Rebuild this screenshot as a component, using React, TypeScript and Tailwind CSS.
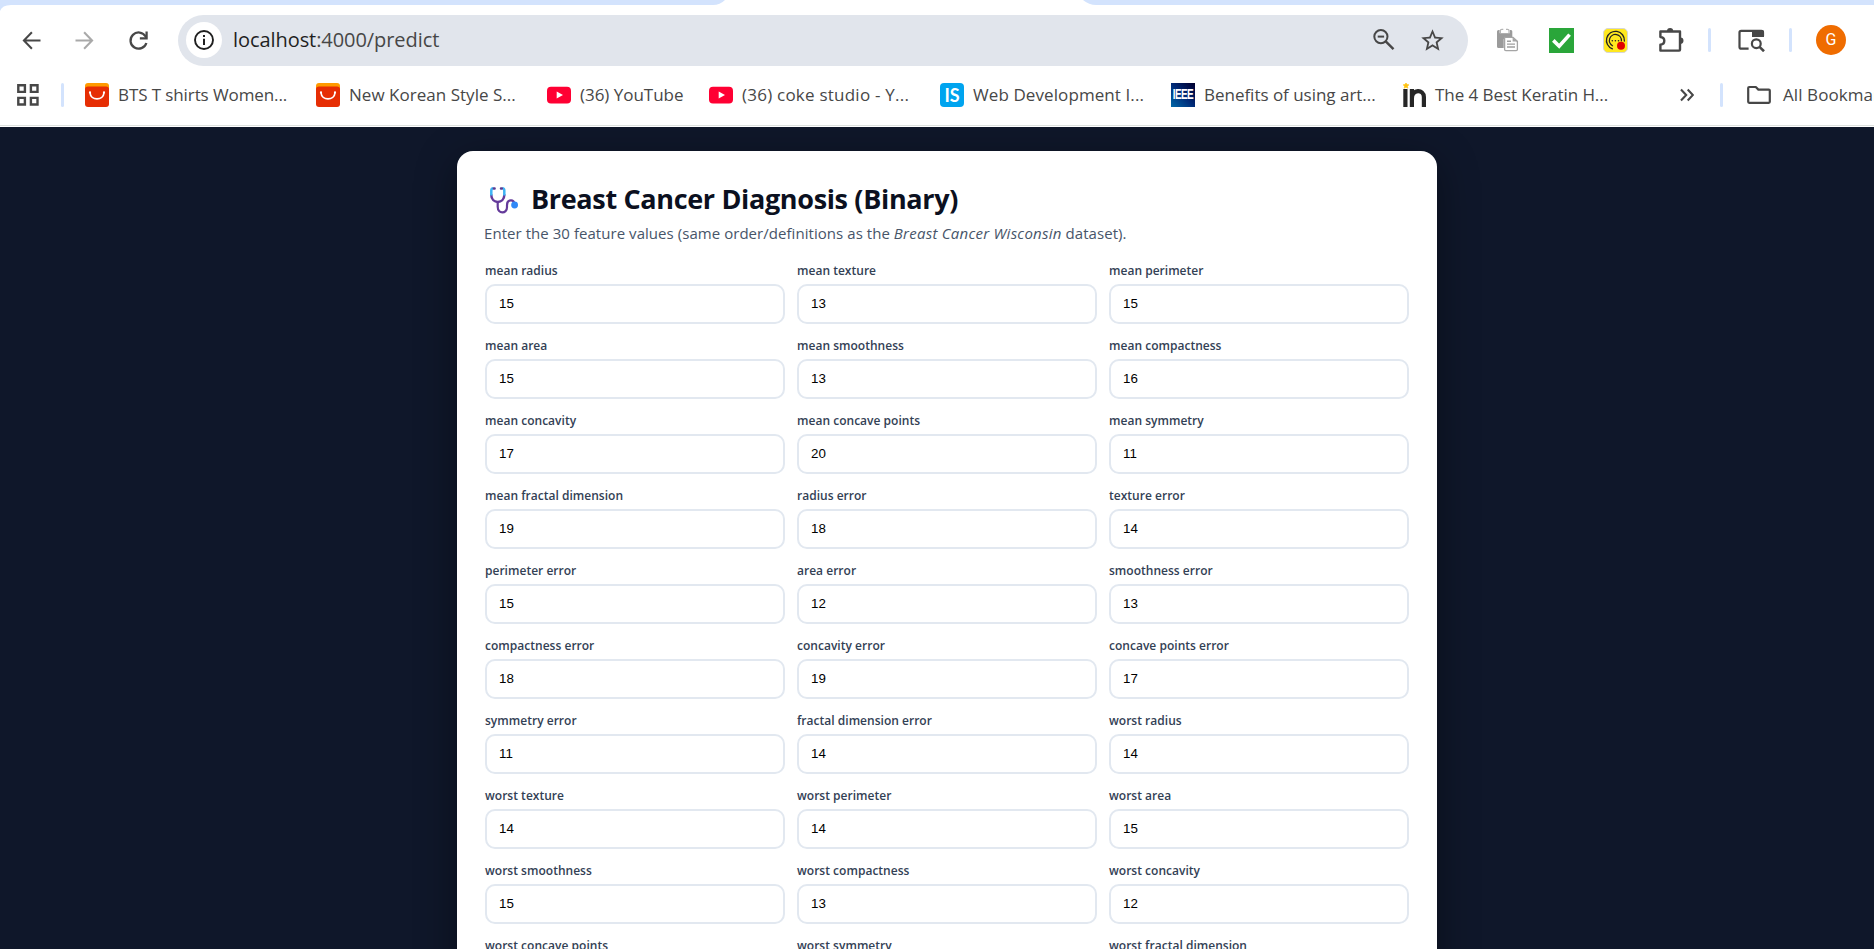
import type { ReactNode } from 'react';

const fields: [string, number][] = [
  ['mean radius', 15], ['mean texture', 13], ['mean perimeter', 15],
  ['mean area', 15], ['mean smoothness', 13], ['mean compactness', 16],
  ['mean concavity', 17], ['mean concave points', 20], ['mean symmetry', 11],
  ['mean fractal dimension', 19], ['radius error', 18], ['texture error', 14],
  ['perimeter error', 15], ['area error', 12], ['smoothness error', 13],
  ['compactness error', 18], ['concavity error', 19], ['concave points error', 17],
  ['symmetry error', 11], ['fractal dimension error', 14], ['worst radius', 14],
  ['worst texture', 14], ['worst perimeter', 14], ['worst area', 15],
  ['worst smoothness', 15], ['worst compactness', 13], ['worst concavity', 12],
  ['worst concave points', 14], ['worst symmetry', 13], ['worst fractal dimension', 15],
];

function Icon({ d, className }: { d: string; className: string }) {
  return (
    <svg viewBox="0 0 24 24" fill="currentColor" className={`shrink-0 ${className}`}>
      <path d={d} />
    </svg>
  );
}

function Separator({ className = '' }: { className?: string }) {
  return <div className={`h-6 w-[3px] shrink-0 rounded-full bg-[#d3e3fd] ${className}`} />;
}

function ShopIcon() {
  return (
    <svg viewBox="0 0 24 24" className="size-6 shrink-0">
      <rect width="24" height="12" rx="3" fill="#ff9a00" />
      <path d="M0 6Q0 3.5 3 3.5H21Q24 3.5 24 6V21Q24 24 21 24H3Q0 24 0 21Z" fill="#e62e04" />
      <path d="M5 9.6C5.6 18 18.4 18 19 9.6" fill="none" stroke="#fff" strokeWidth="1.7" strokeLinecap="round" />
      <circle cx="5" cy="9.4" r="1.1" fill="#fff" />
      <circle cx="19" cy="9.4" r="1.1" fill="#fff" />
    </svg>
  );
}

function VideoIcon() {
  return (
    <svg viewBox="0 0 24 24" className="size-6 shrink-0">
      <rect y="3.8" width="24" height="16.6" rx="4" fill="#ff0033" />
      <path d="M9.7 8.6L16 12.1L9.7 15.6Z" fill="#fff" />
    </svg>
  );
}

function Bookmark({ icon, children, className }: { icon: ReactNode; children: ReactNode; className: string }) {
  return (
    <div className={`flex shrink-0 items-center gap-[9px] whitespace-nowrap ${className}`}>
      {icon}
      <span>{children}</span>
    </div>
  );
}

function TabStrip() {
  return (
    <div className="h-[5px] shrink-0">
      <svg width="1874" height="16" viewBox="0 0 1874 16" className="block">
        <path d="M0 0H725Q720 5 713 5H11Q2 5 0 11Z" fill="#d3e3fd" />
        <path d="M1083 0H1874V5H1096Q1089 5 1083 0Z" fill="#d3e3fd" />
      </svg>
    </div>
  );
}

function Toolbar() {
  return (
    <div className="flex h-[70px] shrink-0 items-center text-[#474747]">
      <Icon className="ml-[18px] size-[27px]" d="M20 11.1H7.4L13 5.3 11.7 4 4 12l7.7 8 1.3-1.3-5.6-5.8H20z" />
      <Icon className="ml-[26px] size-[27px] text-[#a9a9a9]" d="M4 11.1h12.6L11 5.3 12.3 4 20 12l-7.7 8-1.3-1.3 5.6-5.8H4z" />
      <svg viewBox="0 0 24 24" className="ml-[27px] size-[27px] shrink-0" fill="none" stroke="currentColor" strokeWidth="2">
        <path d="M19 14.2A7.2 7.2 0 1 1 18.3 8.4L19 9.6" />
        <path d="M19.2 4V10H13.2" />
      </svg>

      <div className="ml-[26px] flex h-[51px] w-[1290px] shrink-0 items-center rounded-full bg-[#e1e5ec]">
        <div className="ml-2 flex size-9 shrink-0 items-center justify-center rounded-full bg-white text-[#1f1f1f]">
          <svg viewBox="0 0 24 24" className="size-6">
            <circle cx="12" cy="12" r="9" fill="none" stroke="currentColor" strokeWidth="1.9" />
            <path d="M11 10.7h2V17h-2zM11 7h2v2h-2z" fill="currentColor" />
          </svg>
        </div>
        <div className="ml-[11px] flex-1 text-[20px] leading-7 tracking-[-0.07px]">
          <span className="text-[#1f1f1f]">localhost</span>:4000/predict
        </div>
        <svg viewBox="0 0 24 24" className="mr-[23px] size-6 shrink-0" fill="none" stroke="currentColor" strokeWidth="2">
          <circle cx="8.9" cy="8.6" r="6.6" />
          <path d="M13.7 13.4L21.5 21.2" strokeWidth="2.4" />
          <path d="M5.7 8.6H12.1" />
        </svg>
        <Icon
          className="mr-[22px] size-[27px]"
          d="M22 9.24l-7.19-.62L12 2 9.19 8.63 2 9.24l5.46 4.73L5.82 21 12 17.27 18.18 21l-1.63-7.03L22 9.24zM12 15.4l-3.76 2.27 1-4.28-3.32-2.88 4.38-.38L12 6.1l1.71 4.04 4.38.38-3.32 2.88 1 4.28L12 15.4z"
        />
      </div>

      <svg viewBox="0 0 24 24" className="ml-7 size-6 shrink-0">
        <path d="M1 3.5Q1 2 2.5 2H15Q16.3 2 16.3 3.5V10H9Q7.7 10 7.7 11.5V20H2.5Q1 20 1 18.5Z" fill="#9b9b9b" />
        <path d="M3.6 1.2H13.8V5.2H3.6Z" fill="#fff" />
        <path d="M4.4 5V2.6Q4.4 1.4 5.8 1.4H7.3M10 1.4H11.6Q13 1.4 13 2.6V5" fill="none" stroke="#b5b5b5" strokeWidth="1.2" />
        <path d="M8.6 9.4H17L21.4 13.4V21.5Q21.4 22.6 20.2 22.6H9.8Q8.6 22.6 8.6 21.5Z" fill="#fff" stroke="#a5a5a5" strokeWidth="1.3" />
        <path d="M16.6 9.4V13.6H21.4Z" fill="#a5a5a5" />
        <path d="M11 13.2H15M11 16.1H19M11 19H19" stroke="#a0a0a0" strokeWidth="1.4" />
      </svg>
      <svg viewBox="0 0 25 25" className="ml-[29px] size-[25px] shrink-0">
        <rect width="25" height="25" fill="#2aa63a" />
        <path d="M4.3 12.4L10.2 18.2L20.6 6.6" fill="none" stroke="#fff" strokeWidth="3.6" />
      </svg>
      <svg viewBox="0 0 25 25" className="ml-[29px] size-[25px] shrink-0">
        <rect x=".5" y=".5" width="24" height="24" rx="4.5" fill="#ffe81f" stroke="#d6d6d6" />
        <g fill="none" stroke="#222" strokeWidth="1.3" strokeLinecap="round">
          <path d="M9.4 20.8A9 9 0 1 1 21.4 13" />
          <path d="M9.5 17.7A6 6 0 1 1 18.4 12.8" />
        </g>
        <g fill="#222">
          <circle cx="9.3" cy="12.7" r=".8" />
          <circle cx="12.4" cy="12.7" r=".8" />
          <circle cx="15.5" cy="12.7" r=".8" />
        </g>
        <circle cx="18" cy="17.8" r="4" fill="#e00000" />
      </svg>
      <svg viewBox="0 0 25 25" className="ml-[31px] size-[25px] shrink-0 -translate-y-px" fill="none" stroke="currentColor" strokeWidth="2.4" strokeLinejoin="round">
        <path d="M1.4 4.5H21V22.8Q21 23.6 20.2 23.6H1.4V17.7C6.6 17.4 6.6 10.3 1.4 10Z" />
        <path d="M8 4.2A3.1 3.1 0 0 1 14.2 4.2ZM21.4 10.6A3.1 3.1 0 0 1 21.4 16.8Z" fill="currentColor" stroke="none" />
      </svg>
      <Separator className="ml-6" />
      <svg viewBox="0 0 27 24" className="ml-[27px] h-6 w-[27px] shrink-0" fill="none" stroke="currentColor" strokeWidth="2.2">
        <path d="M10.6 20.6H3.2Q1.5 20.6 1.5 18.9V4.5Q1.5 2.9 3.2 2.9H23.3Q25 2.9 25 4.5V8" />
        <path d="M14 2H24Q26 2 26 4V9H14Z" fill="currentColor" stroke="none" />
        <circle cx="18.3" cy="15.7" r="4.4" />
        <path d="M21.5 18.9L26 23.3" strokeWidth="2.6" />
      </svg>
      <Separator className="ml-6" />
      <div className="ml-6 flex size-[30px] shrink-0 items-center justify-center rounded-full bg-[#ef6c00] font-['Roboto',sans-serif] text-[16px] leading-none text-white">
        G
      </div>
    </div>
  );
}

function BookmarkBar() {
  return (
    <div className="flex h-[50px] shrink-0 items-start overflow-hidden pt-2 text-[17px] leading-6 text-[#474747]">
      <svg viewBox="0 0 24 24" className="ml-4 size-6 shrink-0" fill="none" stroke="currentColor" strokeWidth="2.4">
        <path d="M2.3 2.3H8.9V8.9H2.3ZM14.9 2.3H21.5V8.9H14.9ZM2.3 14.9H8.9V21.5H2.3ZM14.9 14.9H21.5V21.5H14.9Z" />
      </svg>
      <Separator className="ml-[21px]" />
      <Bookmark className="ml-[21px] w-[231px] tracking-[-0.1px]" icon={<ShopIcon />}>BTS T shirts Women...</Bookmark>
      <Bookmark className="w-[231px] tracking-[0.03px]" icon={<ShopIcon />}>New Korean Style S...</Bookmark>
      <Bookmark className="w-[162px] tracking-[-0.03px]" icon={<VideoIcon />}>(36) YouTube</Bookmark>
      <Bookmark className="w-[231px] tracking-[0.23px]" icon={<VideoIcon />}>(36) coke studio - Y...</Bookmark>
      <Bookmark
        className="w-[231px] tracking-[0.09px]"
        icon={
          <span className="flex size-6 shrink-0 items-center justify-center rounded bg-[#00a4ef] font-['Lato',sans-serif] text-[18px] leading-none font-bold tracking-normal text-white">
            IS
          </span>
        }
      >
        Web Development I...
      </Bookmark>
      <Bookmark
        className="w-[232px] tracking-[-0.02px]"
        icon={
          <span className="flex size-6 shrink-0 items-center justify-center bg-linear-to-bl from-[#00002c] via-[#002a78] to-[#0068a8] font-['Liberation_Sans',sans-serif] text-[10px] leading-none font-bold tracking-[-0.6px] text-white">
            <span className="scale-y-140">IEEE</span>
          </span>
        }
      >
        Benefits of using art...
      </Bookmark>
      <Bookmark
        className="w-[277px] tracking-[-0.06px]"
        icon={
          <svg viewBox="0 0 24 24" className="-mr-px size-6 shrink-0" fill="none" stroke="#262626" strokeWidth="4.2">
            <path d="M2.4 6V24M8.9 6V24M8.9 15.5C8.9 6 20.9 6 20.9 14V24" />
            <path d="M3 -0.4L3.9 1.6L6 1.8L4.4 3.2L4.9 5.2L3 4.2L1.1 5.2L1.6 3.2L.1 1.8L2.1 1.6Z" fill="#ffc20e" stroke="#ffc20e" strokeWidth=".6" />
          </svg>
        }
      >
        The 4 Best Keratin H...
      </Bookmark>
      <svg viewBox="0 0 14 24" className="h-6 w-3.5 shrink-0" fill="none" stroke="currentColor" strokeWidth="2.1">
        <path d="M1 6.6L6.2 12L1 17.4M7.7 6.6L12.9 12L7.7 17.4" />
      </svg>
      <Separator className="ml-[26px]" />
      <Bookmark
        className="ml-6 tracking-[0.08px]"
        icon={
          <svg viewBox="0 0 24 24" className="mr-[3px] size-6 shrink-0" fill="none" stroke="currentColor" strokeWidth="2.2" strokeLinejoin="round">
            <path d="M1.2 5Q1.2 4 2.2 4H8.8L11.4 6.6H21.8Q22.8 6.6 22.8 7.6V18.8Q22.8 19.8 21.8 19.8H2.2Q1.2 19.8 1.2 18.8Z" />
          </svg>
        }
      >
        All Bookmarks
      </Bookmark>
    </div>
  );
}

function Stethoscope() {
  return (
    <svg viewBox="0 0 30 30" className="size-[30px] shrink-0" fill="none" strokeWidth="2.5" strokeLinecap="round">
      <path d="M8.7 17.4V21.8C8.7 29.2 18 29 18 22.3V20.2C18 14 25.6 13.6 25.6 19.5" stroke="#643a9a" strokeWidth="2.2" />
      <path d="M2.3 10C2.3 19.2 15.3 19.2 15.3 10" stroke="#643a9a" />
      <path d="M4.3 3.3Q2.3 3.3 2.3 5.6V10.4M13.3 3.3Q15.3 3.3 15.3 5.6V10.4" stroke="#3fb4f4" strokeLinecap="butt" />
      <path d="M4.8 3.4H5.6M12 3.4H12.8" stroke="#5b3a90" />
      <circle cx="25.6" cy="20" r="3.4" fill="#3088f7" />
    </svg>
  );
}

export default function App() {
  return (
    <div className="flex h-[949px] w-full flex-col overflow-hidden bg-white font-['Open_Sans','Noto_Sans',sans-serif]">
      <TabStrip />
      <Toolbar />
      <BookmarkBar />
      <div className="h-0.5 shrink-0 border-t border-[#dde1de] bg-white" />
      <main className="flex flex-1 justify-center overflow-hidden bg-[#0f172a] pt-6">
        <section className="ml-5 h-[1000px] w-[980px] shrink-0 rounded-2xl bg-white p-7 shadow-[0_10px_40px_rgba(0,0,0,0.4)]">
          <h1 className="flex h-[41px] items-center gap-3 pl-1 text-[27px] font-bold tracking-[-0.34px] whitespace-nowrap text-[#0b1020]">
            <Stethoscope />
            Breast Cancer Diagnosis (Binary)
          </h1>
          <p className="-ml-px mt-0.5 text-[15px] leading-[23px] tracking-[0.05px] whitespace-nowrap text-[#475569]">
            Enter the 30 feature values (same order/definitions as the{' '}
            <em className="tracking-[0.25px]">Breast Cancer Wisconsin</em> dataset).
          </p>
          <form className="mt-[18px] grid grid-cols-3 gap-x-3 gap-y-3.5">
            {fields.map(([name, value]) => (
              <label key={name} className="flex flex-col gap-[5px]">
                <span className="h-4 text-[12px] leading-4 font-semibold tracking-[0.02px] text-[#334155]">{name}</span>
                <input
                  defaultValue={value}
                  className="h-10 w-full rounded-[10px] border-2 border-[#e2e8f0] bg-white px-3 pb-px font-['Liberation_Sans',Arial,sans-serif] text-[13.333px] text-black"
                />
              </label>
            ))}
          </form>
        </section>
      </main>
    </div>
  );
}
